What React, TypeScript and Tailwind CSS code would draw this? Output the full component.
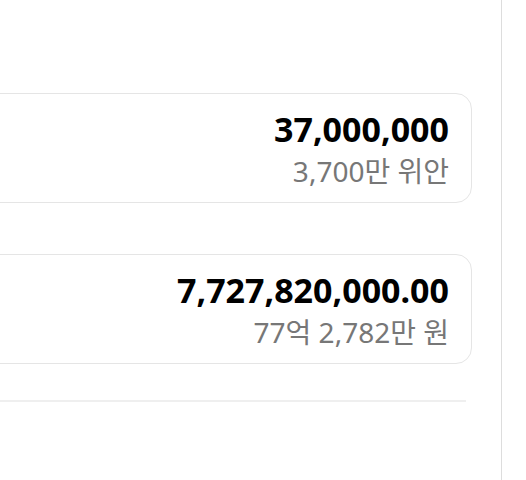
export default function App() {
    const rows = [
        { amount: '37,000,000', words: '3,700만 위안' },
        { amount: '7,727,820,000.00', words: '77억 2,782만 원' },
    ];

    return (
        <div
            className="flex w-[526px] h-[480px] bg-white overflow-hidden"
            style={{ fontFamily: '"Noto Sans", "Noto Sans CJK KR", sans-serif' }}
        >
            {/* Main column */}
            <div className="flex-1 flex flex-col pt-[93px]">
                <div className="flex flex-col gap-[51px]">
                    {rows.map(row => (
                        <div
                            key={row.amount}
                            className="-ml-[24px] mr-[29px] h-[110px] border border-[#e5e5e5] rounded-2xl pr-[22px] pt-[15px] flex flex-col items-end"
                        >
                            <p className="text-[34px] leading-[40px] font-bold text-black">{row.amount}</p>
                            <p className="mt-[6px] text-[28px] leading-[32px] text-[#777777]">{row.words}</p>
                        </div>
                    ))}
                </div>
                <div className="mt-[36px] mr-[35px] h-[2px] bg-[#efefef]" />
            </div>

            {/* Right edge */}
            <div className="w-px h-full bg-[#dddddd] mr-[24px]" />
        </div>
    );
}
